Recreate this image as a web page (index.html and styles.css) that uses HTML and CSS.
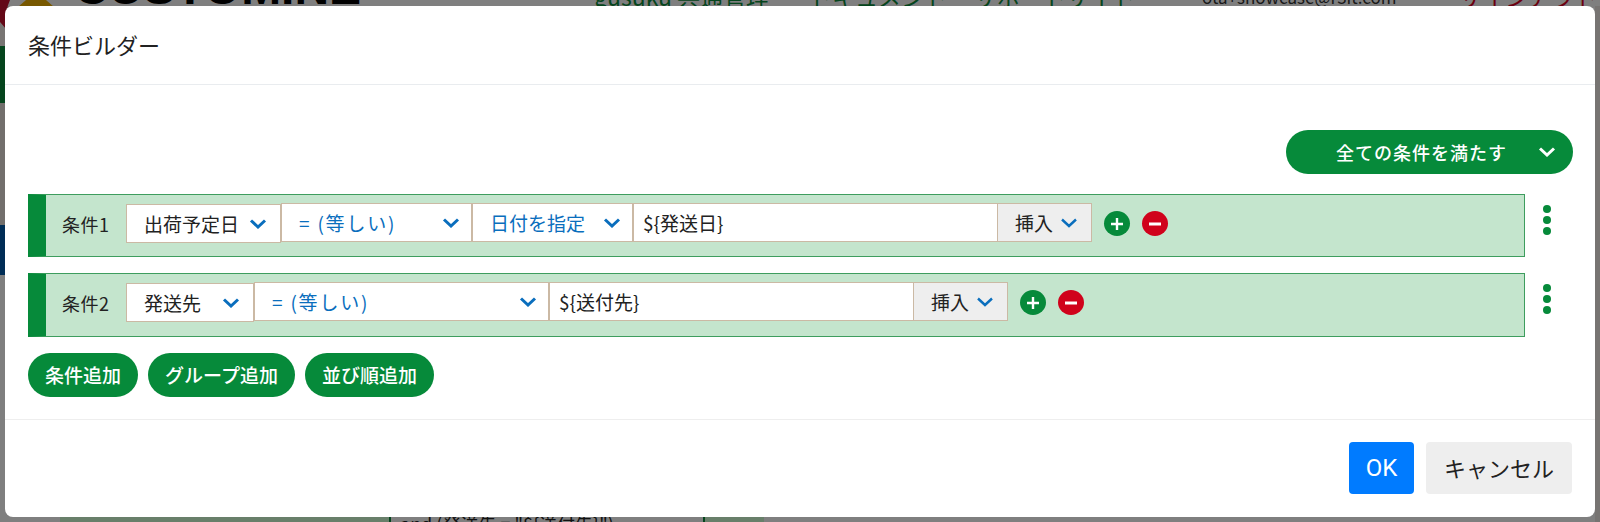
FILE: index.html
```html
<!doctype html>
<html>
<head>
<meta charset="utf-8">
<title>条件ビルダー</title>
<link rel="stylesheet" href="styles.css">
</head>

<body>
<!-- page behind the dialog -->
<div class="page">
	<div class="topbar">
		<span class="logoText">CUSTOMINE</span>
		<span class="topLink linkGusuku">gusuku 共通管理</span>
		<span class="topLink linkDoc">ドキュメント</span>
		<span class="topLink linkSupport">サポートサイト</span>
		<span class="topUser">ota+showcase@r3it.com</span>
		<span class="topOut">サインアウト</span>
	</div>
	<div class="content">
		<ul class="nav">
			<li class="navA"></li>
			<li class="navB"></li>
			<li class="navC"></li>
			<li class="navD"></li>
			<li class="navE"></li>
		</ul>
		<div class="work">
			<div class="resultRow">
				<div class="cellA"></div>
				<div class="cellB">and (発送先 = "${送付先}")</div>
				<div class="cellC"></div>
			</div>
		</div>
		<div class="rightEdge"></div>
	</div>
</div>
<svg class="logoMark" width="60" height="30" viewBox="0 0 60 30"><path d="M0 0H10Q4 12 7 30L0 22Z" fill="#c8102e"/><path d="M18 7L26 0H46L54 7Z" fill="#f0b000"/></svg>
<div class="backdrop"></div>

<div class="modal">
	<div class="modalHead">条件ビルダー</div>
	<div class="modalBody">
		<div class="matchBar">
			<div class="matchSel">
				<span>全ての条件を満たす</span>
				<svg class="chev" width="18" height="10" viewBox="0 0 18 10"><path d="M2 1.5L9 8L16 1.5" fill="none" stroke="#fff" stroke-width="3"/></svg>
			</div>
		</div>

		<div class="condLine">
			<div class="cond">
				<span class="condName">条件1</span>
				<div class="sel selField w155"><span>出荷予定日</span><svg class="chev" width="18" height="10" viewBox="0 0 18 10"><path d="M2 1.5L9 8L16 1.5" fill="none" stroke="#0a6ebd" stroke-width="3"/></svg></div>
				<div class="sel w191"><span class="opText">= (等しい)</span><svg class="chev" width="18" height="10" viewBox="0 0 18 10"><path d="M2 1.5L9 8L16 1.5" fill="none" stroke="#0a6ebd" stroke-width="3"/></svg></div>
				<div class="sel w161"><span>日付を指定</span><svg class="chev" width="18" height="10" viewBox="0 0 18 10"><path d="M2 1.5L9 8L16 1.5" fill="none" stroke="#0a6ebd" stroke-width="3"/></svg></div>
				<div class="valueBox">${発送日}</div>
				<div class="insertBtn">挿入<svg class="chev" width="18" height="10" viewBox="0 0 18 10"><path d="M2 1.5L9 8L16 1.5" fill="none" stroke="#0a6ebd" stroke-width="2.4"/></svg></div>
				<div class="round roundAdd"><svg width="14" height="14" viewBox="0 0 14 14"><path d="M7 1V13M1 7H13" stroke="#fff" stroke-width="2.4"/></svg></div>
				<div class="round roundDel"><svg width="14" height="14" viewBox="0 0 14 14"><path d="M1 7H13" stroke="#fff" stroke-width="3"/></svg></div>
			</div>
			<div class="dots"><i></i><i></i><i></i></div>
		</div>

		<div class="condLine">
			<div class="cond condLast">
				<span class="condName">条件2</span>
				<div class="sel selField w128"><span>発送先</span><svg class="chev" width="18" height="10" viewBox="0 0 18 10"><path d="M2 1.5L9 8L16 1.5" fill="none" stroke="#0a6ebd" stroke-width="3"/></svg></div>
				<div class="sel w295"><span class="opText">= (等しい)</span><svg class="chev" width="18" height="10" viewBox="0 0 18 10"><path d="M2 1.5L9 8L16 1.5" fill="none" stroke="#0a6ebd" stroke-width="3"/></svg></div>
				<div class="valueBox">${送付先}</div>
				<div class="insertBtn">挿入<svg class="chev" width="18" height="10" viewBox="0 0 18 10"><path d="M2 1.5L9 8L16 1.5" fill="none" stroke="#0a6ebd" stroke-width="2.4"/></svg></div>
				<div class="round roundAdd"><svg width="14" height="14" viewBox="0 0 14 14"><path d="M7 1V13M1 7H13" stroke="#fff" stroke-width="2.4"/></svg></div>
				<div class="round roundDel"><svg width="14" height="14" viewBox="0 0 14 14"><path d="M1 7H13" stroke="#fff" stroke-width="3"/></svg></div>
			</div>
			<div class="dots"><i></i><i></i><i></i></div>
		</div>

		<div class="addBtns">
			<div class="addBtn">条件追加</div>
			<div class="addBtn">グループ追加</div>
			<div class="addBtn">並び順追加</div>
		</div>
	</div>
	<div class="modalFoot">
		<div class="btnOk">OK</div>
		<div class="btnCancel">キャンセル</div>
	</div>
</div>
</body>
</html>
```

FILE: styles.css
```css
*{ margin:0; padding:0; box-sizing:border-box}
ul{ list-style:none}
html,body{ height:522px; overflow:hidden}
body{ font-family:"Noto Sans CJK JP","Noto Sans",sans-serif; color:#222; background:#fff}

/* page behind */
.page{ height:522px; display:flex; flex-direction:column}
.topbar{ height:6px; display:flex; align-items:flex-end; font-size:23px; line-height:23px; white-space:nowrap; position:relative}
.topbar span{ margin-bottom:-2px}
.topbar .logoText{ font:bold 48px/48px "Liberation Sans",sans-serif; margin-left:74px; width:520px; color:#000; margin-bottom:-6px}
.topLink{ color:#0a8a3a}
.linkGusuku{ width:215px}
.linkDoc{ width:165px}
.linkSupport{ width:228px}
.topUser{ width:257px; color:#333; font-size:17px}
.topOut{ color:#d8001f}
.content{ flex:1; display:flex}
.nav{ width:60px; display:flex; flex-direction:column}
.navA{ height:40px; background:#f0ebe6}
.navB{ height:57px; background:#0a8a3a}
.navC{ height:122px; background:#e4ded8}
.navD{ height:50px; background:#005bac}
.navE{ flex:1; background:#fff}
.work{ flex:1; display:flex; flex-direction:column; justify-content:flex-end}
.resultRow{ height:5px; display:flex; overflow:hidden; font-size:18px; line-height:12px}
.cellA{ width:329px; background:#d0ffd4}
.cellB{ width:316px; padding-left:9px; border-left:2px solid #0a8a3a; border-right:2px solid #0a8a3a}
.cellC{ width:59px; background:#d0ffd4}
.rightEdge{ width:5px; background:#eee8e4}
.logoMark{ position:absolute; top:0; left:0}
.backdrop{ position:absolute; top:0; left:0; width:100%; height:100%; background:rgba(0,0,0,.5)}

/* dialog */
.modal{ position:absolute; top:6px; left:5px; width:1590px; height:511px; background:#fff; border-radius:8px; display:flex; flex-direction:column; overflow:hidden}
.modalHead{ height:79px; border-bottom:1px solid #e9ecef; padding:0 23px; font-size:22px; line-height:77px}
.modalBody{ height:335px; padding:45px 22px 0 23px; border-bottom:1px solid #eee}
.matchBar{ display:flex; justify-content:flex-end; margin-bottom:20px}
.matchSel{ width:287px; height:44px; border-radius:22px; background:#068a3a; color:#fff; font-size:18px; font-weight:500; letter-spacing:1px; display:flex; align-items:center; justify-content:space-between; padding:0 17px 0 50px}

.condLine{ display:flex; margin-bottom:16px}
.cond{ width:1497px; height:63px; display:flex; align-items:flex-start; background:#c4e5cd; border:1px solid #3e9d5e; border-left:18px solid #068a3a; padding:8px 0 0 16px; font-size:19px}
.condLast{ height:64px}
.condName{ width:64px; margin-top:2px; font-size:18px; line-height:39px; letter-spacing:.5px}
.sel{ height:39px; display:flex; align-items:center; justify-content:space-between; background:#fff; border:1px solid #cbb9a4; padding:0 11px 0 17px; color:#0a6ebd; font-size:19px}
.selField{ color:#222; margin-top:1px; padding-right:13px}
.opText{ letter-spacing:1.8px}
.w155{ width:155px}
.w191{ width:191px}
.w161{ width:161px}
.w128{ width:128px}
.w295{ width:295px}
.valueBox{ width:365px; height:39px; line-height:37px; background:#fff; border:1px solid #cbb9a4; padding:0 9px; font-size:19px; color:#222}
.insertBtn{ width:94px; height:39px; background:#eee; border:1px solid #cbb9a4; border-left:0; display:flex; align-items:center; gap:7px; padding:0 0 0 17px; font-size:19px}
.round{ width:26px; height:25px; margin:8px 0 0 12px; border-radius:50%; display:flex; align-items:center; justify-content:center}
.roundAdd{ background:#068a3a}
.roundDel{ background:#d0021b}
.dots{ margin:11px 0 0 18px; display:flex; flex-direction:column; gap:3px}
.dots i{ display:block; width:8px; height:8px; border-radius:50%; background:#068a3a}

.addBtns{ display:flex; gap:10px; margin-top:16px}
.addBtn{ height:44px; line-height:44px; padding:0 17px; border-radius:22px; background:#068a3a; color:#fff; font-size:19px; font-weight:500}

.modalFoot{ flex:1; display:flex; justify-content:flex-end; gap:12px; padding:22px 23px 0 0}
.btnOk{ width:65px; height:52px; text-align:center; border-radius:4px; background:#007bff; color:#fff; font:24px/52px Roboto,sans-serif}
.btnCancel{ width:146px; height:52px; line-height:50px; text-align:center; border-radius:4px; background:#eee; font-size:22px}
```
